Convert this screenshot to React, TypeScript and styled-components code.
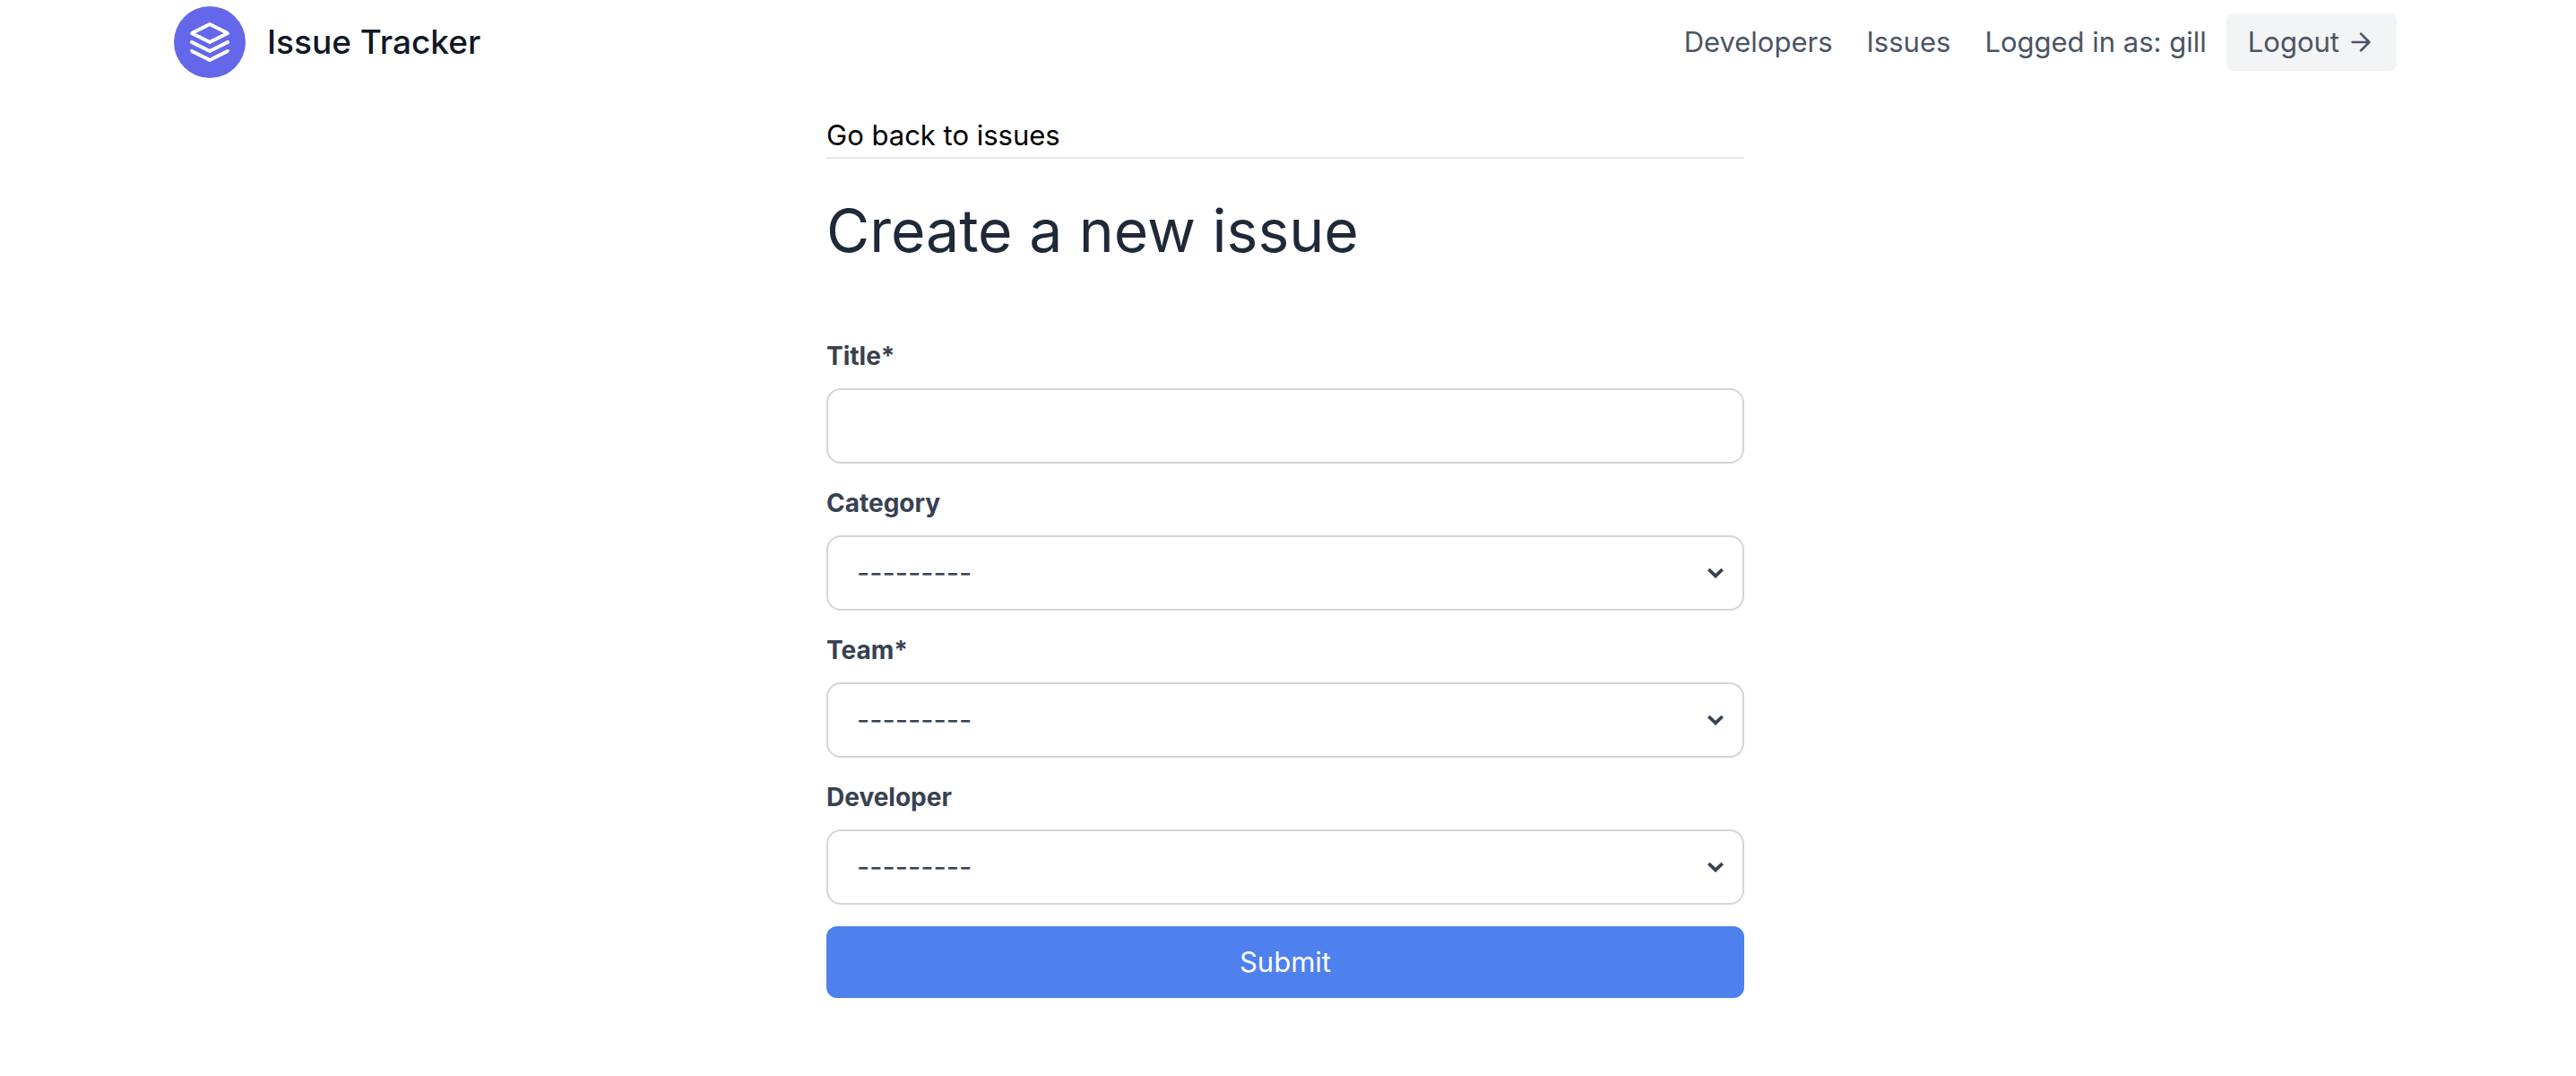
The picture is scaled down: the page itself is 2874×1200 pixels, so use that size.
import React from "react";
import styled, { createGlobalStyle } from "styled-components";

const GlobalStyle = createGlobalStyle`
  *, *::before, *::after { box-sizing: border-box; }
  body {
    margin: 0;
    padding: 7px 6px 0 0;
    background: #fff;
    color: #000;
    font-family: Inter, "Liberation Sans", sans-serif;
    font-size: 31px;
    line-height: 48px;
  }
  a { color: inherit; text-decoration: none; }
  button, input, select { font: inherit; }
`;

const Header = styled.header`
  display: flex;
  align-items: center;
  justify-content: space-between;
  max-width: 2560px;
  margin: 0 auto;
  padding: 0 40px;
  color: #4b5563;
`;

const Brand = styled.a`
  display: flex;
  align-items: center;
  gap: 24px;
`;

const Logo = styled.svg`
  width: 80px;
  height: 80px;
  padding: 16px;
  border-radius: 50%;
  background: #6467e9;
  color: #fff;
`;

const BrandName = styled.span`
  color: #111827;
  font-size: 37px;
  font-weight: 500;
  line-height: 56px;
`;

const Nav = styled.nav`
  display: flex;
  align-items: center;
  gap: 38px;
`;

const Session = styled.div`
  display: flex;
  align-items: center;
  gap: 22px;
`;

const LogoutButton = styled.button`
  display: inline-flex;
  align-items: center;
  gap: 8px;
  padding: 8px 24px;
  border: 0;
  border-radius: 8px;
  background: #f3f4f6;
  color: inherit;
  cursor: pointer;
`;

const ArrowIcon = styled.svg`
  width: 32px;
  height: 32px;
`;

const Main = styled.main`
  max-width: 1024px;
  margin: 40px auto 0;
`;

const BackBar = styled.div`
  border-bottom: 2px solid #e5e7eb;
`;

const BackLink = styled.a`
  display: block;
`;

const Heading = styled.h1`
  margin: 40px 0 80px;
  color: #1f2937;
  font-size: 66px;
  font-weight: 400;
  line-height: 80px;
`;

const Form = styled.form`
  display: flex;
  flex-direction: column;
  gap: 24px;
  color: #374151;
`;

const Field = styled.div`
  display: flex;
  flex-direction: column;
  gap: 16px;
`;

const Label = styled.label`
  font-size: 28px;
  font-weight: 700;
  line-height: 40px;
`;

const TextInput = styled.input`
  width: 100%;
  height: 84px;
  padding: 16px 32px;
  border: 2px solid #d1d5db;
  border-radius: 16px;
  background: #fff;
  color: inherit;
`;

const SelectWrap = styled.div`
  position: relative;
`;

const Select = styled.select`
  display: block;
  width: 100%;
  height: 84px;
  padding: 16px 64px 16px 32px;
  border: 2px solid #d1d5db;
  border-radius: 16px;
  background: #fff;
  color: inherit;
  appearance: none;
`;

const Chevron = styled.svg`
  position: absolute;
  top: 26px;
  right: 16px;
  width: 32px;
  height: 32px;
  pointer-events: none;
`;

const SubmitButton = styled.button`
  height: 80px;
  border: 0;
  border-radius: 12px;
  background: #4e81ee;
  color: #fff;
  cursor: pointer;
`;

const EMPTY = "---------";

function SelectField({ id, label }: { id: string; label: string }) {
  return (
    <Field>
      <Label htmlFor={id}>{label}</Label>
      <SelectWrap>
        <Select id={id} name={id}>
          <option value="">{EMPTY}</option>
        </Select>
        <Chevron
          viewBox="0 0 32 32"
          fill="none"
          stroke="currentColor"
          strokeWidth="3.8"
          aria-hidden="true"
        >
          <path d="M8.3 12l7.7 7.4 7.7-7.4" />
        </Chevron>
      </SelectWrap>
    </Field>
  );
}

export default function App() {
  return (
    <>
      <GlobalStyle />
      <Header>
        <Brand href="#">
          <Logo
            viewBox="0 0 24 24"
            fill="none"
            stroke="currentColor"
            strokeWidth="2"
            strokeLinecap="round"
            strokeLinejoin="round"
            aria-hidden="true"
          >
            <path d="M12 2L2 7l10 5 10-5-10-5zM2 17l10 5 10-5M2 12l10 5 10-5" />
          </Logo>
          <BrandName>Issue Tracker</BrandName>
        </Brand>
        <Nav>
          <a href="#developers">Developers</a>
          <a href="#issues">Issues</a>
          <Session>
            <span>Logged in as: gill</span>
            <LogoutButton type="button">
              Logout
              <ArrowIcon
                viewBox="0 0 24 24"
                fill="none"
                stroke="currentColor"
                strokeWidth="2"
                strokeLinecap="round"
                strokeLinejoin="round"
                aria-hidden="true"
              >
                <path d="M5 12h14M12 5l7 7-7 7" />
              </ArrowIcon>
            </LogoutButton>
          </Session>
        </Nav>
      </Header>
      <Main>
        <BackBar>
          <BackLink href="#issues">Go back to issues</BackLink>
        </BackBar>
        <Heading>Create a new issue</Heading>
        <Form onSubmit={(event) => event.preventDefault()}>
          <Field>
            <Label htmlFor="title">Title*</Label>
            <TextInput id="title" name="title" type="text" required />
          </Field>
          <SelectField id="category" label="Category" />
          <SelectField id="team" label="Team*" />
          <SelectField id="developer" label="Developer" />
          <SubmitButton type="submit">Submit</SubmitButton>
        </Form>
      </Main>
    </>
  );
}
